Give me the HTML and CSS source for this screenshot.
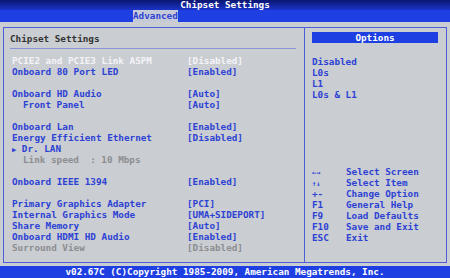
FILE: index.html
```html
<!DOCTYPE html>
<html lang="en">
<head>
    <meta charset="UTF-8">
    <title>Chipset Settings</title>
    <link rel="stylesheet" href="styles.css">
</head>
<body>

<div class="titlebar">Chipset Settings</div>
<div class="tabbar"><span class="tab">Advanced</span></div>

<div class="main">
    <div class="panel left">
        <div class="heading">Chipset Settings</div>
        <div class="sep"></div>
        <div class="row active"><span class="label">PCIE2 and PCIE3 Link ASPM</span><span>[Disabled]</span></div>
        <div class="row"><span class="label">Onboard 80 Port LED</span><span>[Enabled]</span></div>
        <div class="row"></div>
        <div class="row"><span class="label">Onboard HD Audio</span><span>[Auto]</span></div>
        <div class="row"><span class="label sub">Front Panel</span><span>[Auto]</span></div>
        <div class="row"></div>
        <div class="row"><span class="label">Onboard Lan</span><span>[Enabled]</span></div>
        <div class="row"><span class="label">Energy Efficient Ethernet</span><span>[Disabled]</span></div>
        <div class="row"><span class="label"><span class="arrow">&#9654;</span> Dr. LAN</span></div>
        <div class="row grey"><span class="label sub">Link speed&nbsp; : 10 Mbps</span></div>
        <div class="row"></div>
        <div class="row"><span class="label">Onboard IEEE 1394</span><span>[Enabled]</span></div>
        <div class="row"></div>
        <div class="row"><span class="label">Primary Graphics Adapter</span><span>[PCI]</span></div>
        <div class="row"><span class="label">Internal Graphics Mode</span><span>[UMA+SIDEPORT]</span></div>
        <div class="row"><span class="label">Share Memory</span><span>[Auto]</span></div>
        <div class="row"><span class="label">Onboard HDMI HD Audio</span><span>[Enabled]</span></div>
        <div class="row grey"><span class="label">Surround View</span><span>[Disabled]</span></div>
    </div>

    <div class="panel right">
        <div class="options-title">Options</div>
        <div class="option-list">
            <div class="row">Disabled</div>
            <div class="row">L0s</div>
            <div class="row">L1</div>
            <div class="row">L0s &amp; L1</div>
        </div>
        <div class="help">
            <div class="row"><span class="key"><span class="small">&larr;&rarr;</span></span><span>Select Screen</span></div>
            <div class="row"><span class="key"><span class="small">&uarr;&darr;</span></span><span>Select Item</span></div>
            <div class="row"><span class="key">+-</span><span>Change Option</span></div>
            <div class="row"><span class="key">F1</span><span>General Help</span></div>
            <div class="row"><span class="key">F9</span><span>Load Defaults</span></div>
            <div class="row"><span class="key">F10</span><span>Save and Exit</span></div>
            <div class="row"><span class="key">ESC</span><span>Exit</span></div>
        </div>
    </div>
</div>

<div class="footer">v02.67C (C)Copyright 1985-2009, American Megatrends, Inc.</div>

</body>
</html>
```

FILE: styles.css
```css
body {
    margin: 0;
    width: 450px;
    height: 278px;
    overflow: hidden;
    background-color: #cacdd1;
    font-family: "DejaVu Sans Mono", "Liberation Mono", monospace;
    font-weight: bold;
    font-size: 9.3px;
    color: #2d42d4;
}

.titlebar {
    height: 10px;
    line-height: 10px;
    text-align: center;
    color: #ffffff;
    background: linear-gradient(#0a1670, #1a34c8);
}

.tabbar {
    height: 12px;
    background-color: #1e3fe2;
    padding-left: 133px;
}

.tab {
    display: inline-block;
    width: 45px;
    height: 12px;
    line-height: 12px;
    background-color: #c6cad8;
    color: #2d42d4;
}

.main {
    display: flex;
    height: 244px;
    padding: 5px 3px 3px 3px;
    box-sizing: border-box;
}

.panel {
    border: 1px solid #4c5fd6;
    box-sizing: border-box;
}

.left {
    width: 302px;
    padding: 5px 0 0 6px;
}

.right {
    width: 142px;
    border-left: none;
    padding: 4px 8px 0 7px;
}

.row {
    height: 11px;
    line-height: 11px;
    display: flex;
    white-space: pre;
}

.heading {
    height: 11px;
    line-height: 11px;
    color: #333333;
}

.sep {
    height: 1px;
    background-color: #8a95d8;
    margin: 4px 8px 6px 0;
}

.label {
    width: 175px;
    margin-left: 2px;
}

.sub {
    padding-left: 11px;
    width: 164px;
}

.active {
    color: #f4f4f8;
}

.grey {
    color: #8c8e92;
}

.arrow {
    font-size: 7px;
}

.options-title {
    height: 11px;
    line-height: 11px;
    background-color: #1e3fe2;
    color: #ffffff;
    text-align: center;
    margin-bottom: 13px;
}

.help {
    margin-top: 66px;
}

.key {
    width: 34px;
}

.small {
    font-size: 7px;
}

.footer {
    height: 12px;
    line-height: 12px;
    background-color: #1e3fe2;
    color: #ffffff;
    text-align: center;
}
```
